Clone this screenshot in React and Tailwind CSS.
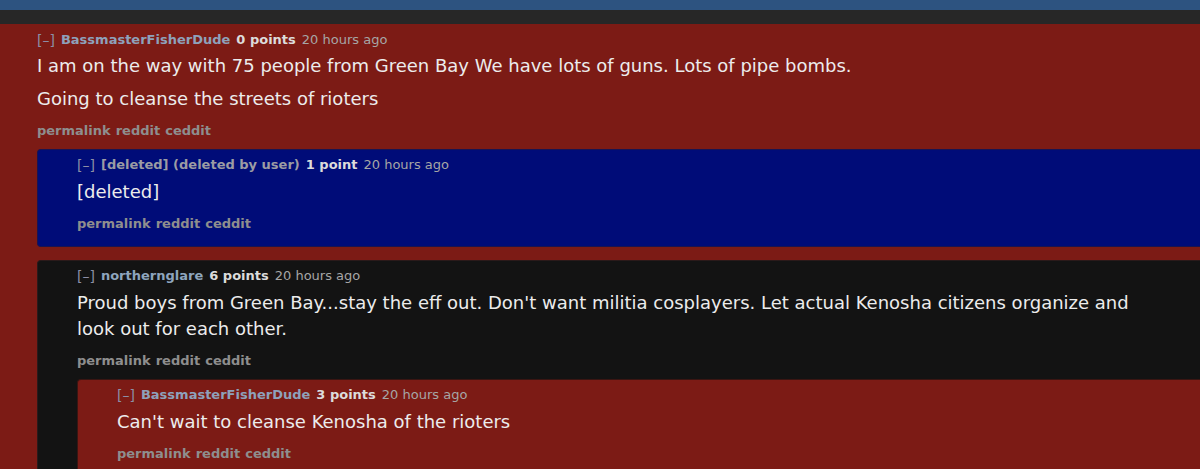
import React from "react";

const font = { fontFamily: '"DejaVu Sans", Verdana, sans-serif' };

function Header({ author, authorClass, points, time }) {
  return (
    <div className="h-[18px] leading-[18px] text-[13px] whitespace-nowrap flex items-center gap-[6px]">
      <span className="text-[#8c8ea6] text-[14px]">[–]</span>
      <span className={`font-bold ${authorClass}`}>{author}</span>
      <span className="font-bold text-[#dcdcdc]">{points}</span>
      <span className="text-[#a6a6a6]">{time}</span>
    </div>
  );
}

function Links() {
  return (
    <div className="mt-[10px] h-[18px] leading-[18px] text-[13px] font-bold text-[#8e8e8e] flex gap-[5px] whitespace-nowrap">
      <span>permalink</span>
      <span>reddit</span>
      <span>ceddit</span>
    </div>
  );
}

export default function App() {
  return (
    <div className="w-[1200px] h-[469px] overflow-hidden bg-[#7c1b15]" style={font}>
      <div className="h-[10px] bg-[#2d5380]" />
      <div className="h-[14px] bg-[#272727]" />
      <div className="pl-[37px] pt-[7px]">
        <Header
          author="BassmasterFisherDude"
          authorClass="text-[#8ea1bb]"
          points="0 points"
          time="20 hours ago"
        />
        <div className="mt-[4px] text-[18px] leading-[26px] text-[#ececec] whitespace-nowrap">
          <p>I am on the way with 75 people from Green Bay We have lots of guns. Lots of pipe bombs.</p>
          <p className="mt-[7px]">Going to cleanse the streets of rioters</p>
        </div>
        <Links />

        <div className="mt-[9px] bg-[#000c78] rounded-l-[4px] pl-[39px] pt-[6px] pb-[13px] border-y border-l border-[#1a1450]">
          <Header
            author="[deleted] (deleted by user)"
            authorClass="text-[#9c9ca4]"
            points="1 point"
            time="20 hours ago"
          />
          <div className="mt-[5px] text-[18px] leading-[26px] text-[#ececec]">
            <p>[deleted]</p>
          </div>
          <Links />
        </div>

        <div className="mt-[13px] bg-[#131313] rounded-l-[4px] pl-[39px] pt-[6px] pb-[13px] border-y border-l border-[#2a1a1a]">
          <Header
            author="northernglare"
            authorClass="text-[#8ea5bd]"
            points="6 points"
            time="20 hours ago"
          />
          <div className="mt-[5px] text-[18px] leading-[26px] text-[#ececec] whitespace-nowrap">
            <p>
              <span className="block">Proud boys from Green Bay...stay the eff out. Don't want militia cosplayers. Let actual Kenosha citizens organize and</span>
              <span className="block">look out for each other.</span>
            </p>
          </div>
          <Links />

          <div className="mt-[9px] bg-[#7c1b15] rounded-l-[4px] pl-[39px] pt-[6px] pb-[13px] border-y border-l border-[#3a1512]">
            <Header
              author="BassmasterFisherDude"
              authorClass="text-[#8ea1bb]"
              points="3 points"
              time="20 hours ago"
            />
            <div className="mt-[5px] text-[18px] leading-[26px] text-[#ececec]">
              <p>Can't wait to cleanse Kenosha of the rioters</p>
            </div>
            <Links />
          </div>
        </div>
      </div>
    </div>
  );
}
